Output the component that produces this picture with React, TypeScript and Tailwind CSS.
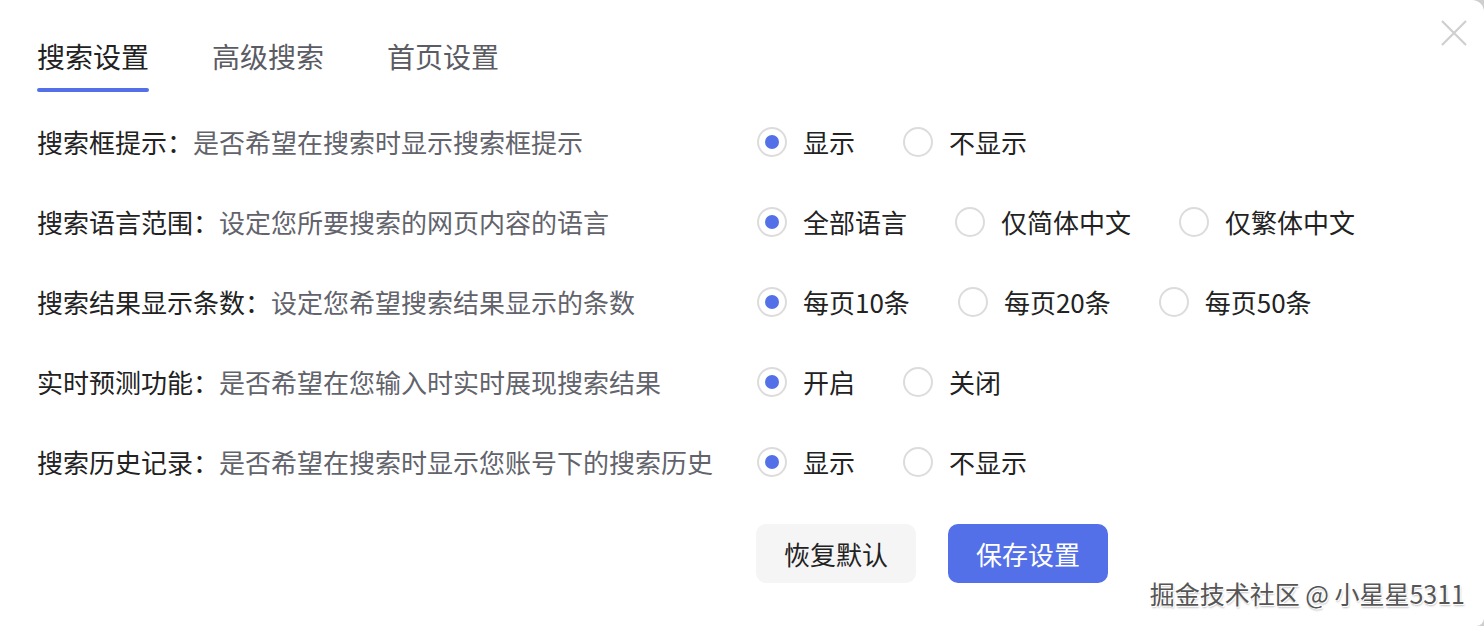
import React from "react";

const FONT = { fontFamily: '"Noto Sans CJK SC", "Noto Sans", sans-serif' };

type Row = { title: string; desc: string; options: string[] };

const rows: Row[] = [
  { title: "搜索框提示：", desc: "是否希望在搜索时显示搜索框提示", options: ["显示", "不显示"] },
  { title: "搜索语言范围：", desc: "设定您所要搜索的网页内容的语言", options: ["全部语言", "仅简体中文", "仅繁体中文"] },
  { title: "搜索结果显示条数：", desc: "设定您希望搜索结果显示的条数", options: ["每页10条", "每页20条", "每页50条"] },
  { title: "实时预测功能：", desc: "是否希望在您输入时实时展现搜索结果", options: ["开启", "关闭"] },
  { title: "搜索历史记录：", desc: "是否希望在搜索时显示您账号下的搜索历史", options: ["显示", "不显示"] },
];

function Radio({ checked }: { checked: boolean }) {
  return (
    <span className="flex h-[30px] w-[30px] shrink-0 items-center justify-center rounded-full border-2 border-[#dcdcdc] bg-white">
      {checked && <span className="h-[14px] w-[14px] rounded-full bg-[#5470e8]" />}
    </span>
  );
}

function SettingRow({ row }: { row: Row }) {
  return (
    <div className="flex h-[80px] items-center">
      <div className="w-[720px] shrink-0 text-[26px] leading-[36px]">
        <span className="text-[#222]">{row.title}</span>
        <span className="text-[#62636b]">{row.desc}</span>
      </div>
      <div className="flex items-center">
        {row.options.map((opt, i) => (
          <label key={opt} className="mr-[48px] flex items-center gap-[16px]">
            <Radio checked={i === 0} />
            <span className="text-[26px] leading-[36px] text-[#222]">{opt}</span>
          </label>
        ))}
      </div>
    </div>
  );
}

export default function App() {
  const tabs = ["搜索设置", "高级搜索", "首页设置"];
  return (
    <div className="h-[626px] w-[1484px] bg-[#cfcfcf]" style={FONT}>
      <div className="relative h-full w-full rounded-tr-[12px] rounded-br-[8px] bg-white pl-[37px] pt-[36px]">
        <button className="absolute right-[16px] top-[19px] text-[#cfcfcf]">
          <svg width="28" height="28" viewBox="0 0 28 28" fill="none" stroke="currentColor" strokeWidth="2.2">
            <path d="M2 2 L26 26 M26 2 L2 26" />
          </svg>
        </button>

        <div className="flex gap-[63px]">
          {tabs.map((t, i) => (
            <div key={t} className="flex flex-col">
              <span className={`text-[28px] leading-[40px] ${i === 0 ? "text-[#222]" : "text-[#5b5c63]"}`}>{t}</span>
              <span className={`mt-[12px] h-[4px] rounded-full ${i === 0 ? "bg-[#5470e8]" : "bg-transparent"}`} />
            </div>
          ))}
        </div>

        <div className="mt-[10px]">
          {rows.map((r) => (
            <SettingRow key={r.title} row={r} />
          ))}
        </div>

        <div className="ml-[719px] mt-[22px] flex gap-[32px]">
          <button className="h-[59px] w-[160px] rounded-[10px] bg-[#f5f5f5] text-[26px] text-[#222]">恢复默认</button>
          <button className="h-[59px] w-[160px] rounded-[10px] bg-[#5470e8] text-[26px] text-white">保存设置</button>
        </div>

        <div
          className="absolute bottom-[18px] right-[19px] text-[25px] leading-[30px] text-[#555]"
          style={{ textShadow: "1px 1px 0 #fff, -1px -1px 0 #fff, 1px 2px 2px rgba(0,0,0,0.25)" }}
        >
          掘金技术社区 @ 小星星5311
        </div>
      </div>
    </div>
  );
}
